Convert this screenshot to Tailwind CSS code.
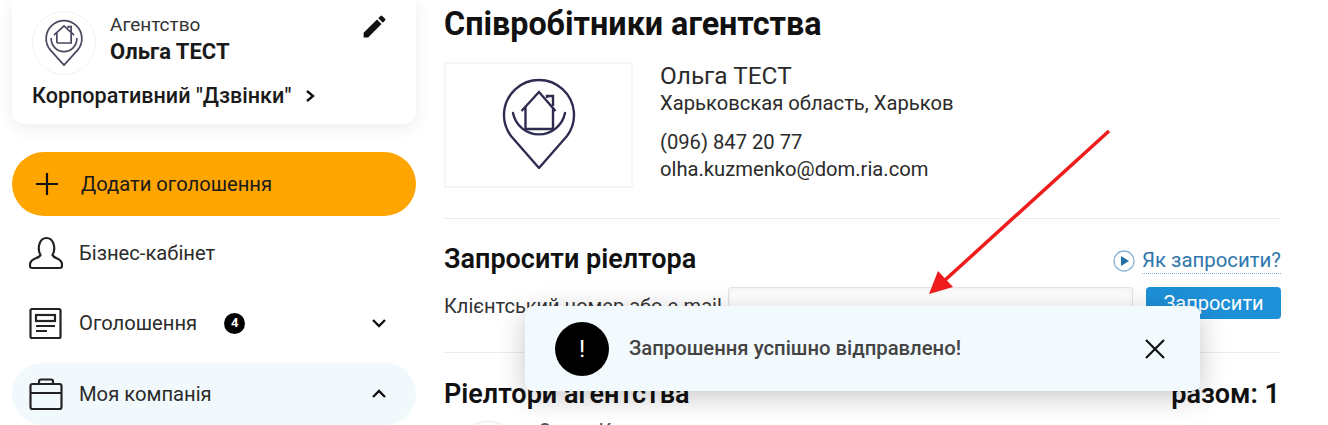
<!DOCTYPE html>
<html lang="uk">

<head>
  <meta charset="UTF-8" />
  <meta name="viewport" content="width=device-width, initial-scale=1.0" />
  <script src="https://cdn.jsdelivr.net/npm/@tailwindcss/browser@4"></script>
  <title>Співробітники агентства</title>
</head>

<body class="bg-white font-[Roboto,sans-serif] text-[#1a1a1a]">
  <div class="relative flex h-[425px] w-[1328px] overflow-hidden">

    <!-- sidebar -->
    <aside class="ml-3 w-[404px] shrink-0">
      <div class="h-[124px] rounded-b-xl bg-white px-5 pt-[11px] shadow-[0_4px_16px_rgba(0,0,0,0.08)]">
        <div class="flex">
          <div class="flex h-16 w-16 items-center justify-center rounded-full border border-[#f2f2f2]">
            <svg class="h-[50px] w-[50px]" viewBox="0 0 60 70" fill="none" stroke="#4a4860" stroke-width="2.4">
              <path d="M30 66 L11 45 A25 25 0 1 1 49 45 Z" stroke-linejoin="round" />
              <path d="M12 29 A18 18 0 0 0 48 29" stroke-linecap="round" />
              <path d="M20 35 V20 M40 20 V35 H20 M16 24 L30 11 L44 24 M36 14 V12 H40 V20" />
            </svg>
          </div>
          <div class="ml-[14px] flex-1 pt-[3px]">
            <div class="text-[19px] leading-[22px] text-[#333]">Агентство</div>
            <div class="mt-1 text-[22px] leading-6 font-bold">Ольга ТЕСТ</div>
          </div>
          <svg class="mt-[1px] mr-[7px] h-[29px] w-[29px]" viewBox="0 0 24 24" fill="#111">
            <path d="M3 17.25V21h3.75L17.81 9.94l-3.75-3.75L3 17.25zM20.71 7.04a1 1 0 0 0 0-1.41l-2.34-2.34a1 1 0 0 0-1.41 0l-1.83 1.83 3.75 3.75 1.83-1.83z" />
          </svg>
        </div>
        <div class="mt-[7px] flex items-center text-[21.6px] leading-7 font-medium">
          Корпоративний "Дзвінки"
          <svg class="ml-3 h-3.5 w-3.5" viewBox="0 0 14 14" fill="none" stroke="#111" stroke-width="2.4">
            <path d="M4 2 L10 7 L4 12" />
          </svg>
        </div>
      </div>

      <button class="mt-7 flex h-16 w-full items-center rounded-full bg-[#ffa500] pl-6 text-[20.2px]">
        <svg class="h-[22px] w-[22px]" viewBox="0 0 22 22" stroke="#111" stroke-width="2.2">
          <path d="M0 11 H22 M11 0 V22" />
        </svg>
        <span class="ml-[23px]">Додати оголошення</span>
      </button>

      <nav class="text-[20.2px] text-[#2b2b2b]">
        <div class="flex h-[74px] items-center pl-[17px]">
          <svg class="h-[34px] w-[34px]" viewBox="0 0 34 34" fill="none" stroke="#222" stroke-width="2.2">
            <path d="M11.500 19 C8 13 10 2 17.500 2 C25 2 27 13 23.500 19 C25 23 33 22 33 28.500 V30 a2 2 0 0 1-2 2 H3 a2 2 0 0 1-2-2 V28.500 C1 22 10 23 11.500 19 Z" />
          </svg>
          <span class="ml-4">Бізнес-кабінет</span>
        </div>
        <div class="flex h-[66px] items-center pl-[17px]">
          <svg class="h-[34px] w-[34px]" viewBox="0 0 34 34" fill="none" stroke="#222" stroke-width="2.2">
            <rect x="1.500" y="3" width="30" height="29" rx="1.500" />
            <rect x="7" y="9" width="19" height="6" />
            <path d="M7 20 H26 M7 25 H18" />
          </svg>
          <span class="ml-4">Оголошення</span>
          <span class="ml-[27px] flex h-[21px] w-[21px] items-center justify-center rounded-full bg-black text-[13px] font-bold text-white">4</span>
          <svg class="mr-[29px] ml-auto h-4 w-4" viewBox="0 0 16 16" fill="none" stroke="#111" stroke-width="2.4">
            <path d="M2 5 L8 11 L14 5" />
          </svg>
        </div>
        <div class="mt-[7px] flex h-[62px] items-center rounded-[31px] bg-[#f2f9fd] pl-[17px]">
          <svg class="h-[34px] w-[34px]" viewBox="0 0 34 34" fill="none" stroke="#222" stroke-width="2.2">
            <rect x="1.500" y="7" width="31" height="25" rx="2" />
            <path d="M1.500 16 H32.500 M10 7 V4.500 a2 2 0 0 1 2-2 H22 a2 2 0 0 1 2 2 V7" />
          </svg>
          <span class="ml-4">Моя компанія</span>
          <svg class="mr-[29px] ml-auto h-4 w-4" viewBox="0 0 16 16" fill="none" stroke="#111" stroke-width="2.4">
            <path d="M2 11 L8 5 L14 11" />
          </svg>
        </div>
      </nav>
    </aside>

    <!-- main -->
    <main class="ml-7 w-[836px] shrink-0">
      <h1 class="mt-[5px] text-[32.3px] leading-[38px] font-bold text-[#111]">Співробітники агентства</h1>

      <div class="mt-[19px] flex border-b border-[#ececec] pb-[30px]">
        <div class="flex h-[126px] w-[189px] items-center justify-center border-2 border-[#f5f5f5]">
          <svg class="mb-1 h-[92px] w-[74px]" viewBox="0 0 74 92" fill="none" stroke="#2f2c52" stroke-width="2.4">
            <path d="M37 91 L9 59 A35 35 0 1 1 65 59 Z" stroke-linejoin="round" />
            <path d="M11 36 A26.500 26.500 0 0 0 63 36" stroke-linecap="round" />
            <path d="M23.500 30 V52 H51 V30 M19.500 34 L37 15 L53.500 34 M45 21 V19 H51 V29" />
          </svg>
        </div>
        <div class="ml-[27px] text-[#2b2b2b]">
          <div class="mt-[1px] text-[24.4px] leading-[26px]">Ольга ТЕСТ</div>
          <div class="text-[20.2px] leading-[28px]">Харьковская область, Харьков</div>
          <div class="mt-[11px] text-[20.2px] leading-[28px]">(096) 847 20 77</div>
          <div class="text-[20.2px] leading-[26px]">olha.kuzmenko@dom.ria.com</div>
        </div>
      </div>

      <div class="border-b border-[#ececec] pb-[33px]">
        <div class="mt-[24px] flex items-center justify-between">
          <h2 class="text-[27px] leading-8 font-semibold text-[#111]">Запросити ріелтора</h2>
          <a class="mt-1 -mr-px flex items-center text-[20.4px] text-[#2f76ad]">
            <svg class="mr-[7px] h-[22px] w-[22px]" viewBox="0 0 22 22" fill="none">
              <circle cx="11" cy="11" r="10" stroke="#8db4d4" stroke-width="1.300" />
              <path d="M8 6 L16 11 L8 16 Z" fill="#256ea6" />
            </svg>
            <span class="border-b border-dotted border-[#8db4d4] leading-[25px]">Як запросити?</span>
          </a>
        </div>
        <div class="mt-[12px] flex h-8 items-center">
          <label class="mt-[6px] w-[284px] shrink-0 text-[20px] whitespace-nowrap text-[#333]">Клієнтський номер або e-mail</label>
          <input class="h-8 w-[405px] shrink-0 rounded-[3px] border border-[#e4e4e4] bg-white shadow-[inset_0_2px_5px_rgba(0,0,0,0.05)]" type="text" />
          <button class="ml-[13px] h-8 w-[135px] shrink-0 rounded-[4px] bg-[#1e90d8] text-[20px] text-white">Запросити</button>
        </div>
      </div>

      <div class="mt-[25px] flex items-center justify-between text-[27px] leading-8 font-semibold text-[#111]">
        <h2>Ріелтори агентства</h2>
        <span>разом: 1</span>
      </div>
      <div class="mt-[11px] flex items-start">
        <div class="ml-[12px] h-16 w-16 shrink-0 rounded-full border border-[#e8e8e8]"></div>
        <div class="ml-[18px] text-[20px] leading-5 text-[#555]">Ольга Кузьменко</div>
      </div>
    </main>

    <!-- arrow drawn over the page -->
    <svg class="pointer-events-none absolute top-0 left-0 z-20" width="1328" height="425" viewBox="0 0 1328 425">
      <path d="M1109 131 L944 281" stroke="#ee1c1c" stroke-width="3.500" />
      <path d="M929 294 L938 271 L953 287 Z" fill="#ee1c1c" />
    </svg>

    <!-- toast -->
    <div class="absolute top-[306px] left-[525px] z-10 flex h-[85px] w-[675px] items-center rounded-lg bg-[#f3fafe] pr-[35px] pl-[30px] shadow-[0_6px_28px_rgba(0,0,0,0.22)]">
      <div class="flex h-[54px] w-[54px] items-center justify-center rounded-full bg-black text-[24px] font-normal text-white">!</div>
      <div class="ml-5 flex-1 text-[20.3px] font-medium text-[#444]">Запрошення успішно відправлено!</div>
      <svg class="h-5 w-5" viewBox="0 0 20 20" stroke="#111" stroke-width="2.200">
        <path d="M1 1 L19 19 M19 1 L1 19" />
      </svg>
    </div>
  </div>
</body>

</html>
